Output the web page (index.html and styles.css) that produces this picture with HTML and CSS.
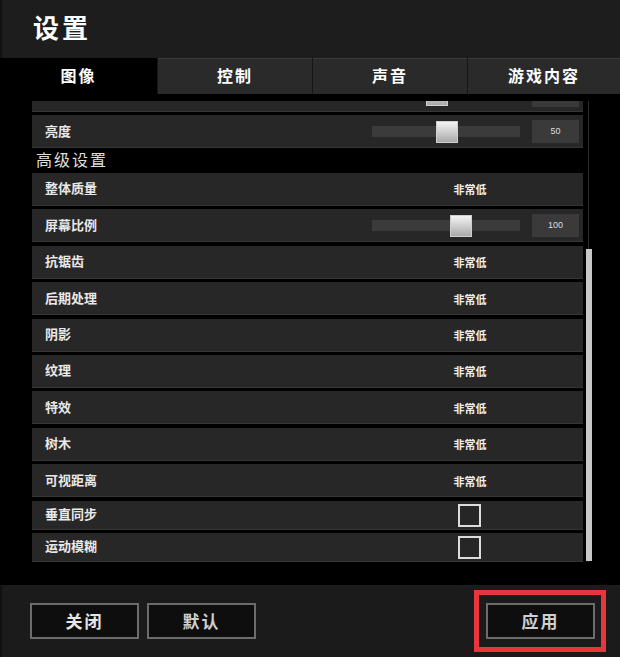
FILE: index.html
```html
<!DOCTYPE html>
<html lang="zh-CN">
<head>
<meta charset="utf-8">
<title>设置</title>
<link rel="stylesheet" href="styles.css">
</head>
<body>
<div class="window">
  <header class="titlebar"><h1 class="title">设置</h1></header>
  <nav class="tabs">
    <div class="tab active">图像</div>
    <div class="tab">控制</div>
    <div class="tab">声音</div>
    <div class="tab">游戏内容</div>
  </nav>
  <main class="content">
    <div class="viewport">
      <div class="list">
        <div class="row">
          <span class="label"></span>
          <div class="control">
            <div class="track"><div class="knob" style="left:54px"></div></div>
            <div class="numbox"></div>
          </div>
        </div>
        <div class="row">
          <span class="label">亮度</span>
          <div class="control">
            <div class="track"><div class="knob" style="left:64px"></div></div>
            <div class="numbox">50</div>
          </div>
        </div>
        <div class="section">高级设置</div>
        <div class="row"><span class="label">整体质量</span><div class="control"><span class="value">非常低</span></div></div>
        <div class="row">
          <span class="label">屏幕比例</span>
          <div class="control">
            <div class="track"><div class="knob" style="left:78px"></div></div>
            <div class="numbox">100</div>
          </div>
        </div>
        <div class="row"><span class="label">抗锯齿</span><div class="control"><span class="value">非常低</span></div></div>
        <div class="row"><span class="label">后期处理</span><div class="control"><span class="value">非常低</span></div></div>
        <div class="row"><span class="label">阴影</span><div class="control"><span class="value">非常低</span></div></div>
        <div class="row"><span class="label">纹理</span><div class="control"><span class="value">非常低</span></div></div>
        <div class="row"><span class="label">特效</span><div class="control"><span class="value">非常低</span></div></div>
        <div class="row"><span class="label">树木</span><div class="control"><span class="value">非常低</span></div></div>
        <div class="row"><span class="label">可视距离</span><div class="control"><span class="value">非常低</span></div></div>
        <div class="row short"><span class="label">垂直同步</span><div class="control"><span class="checkbox"></span></div></div>
        <div class="row short"><span class="label">运动模糊</span><div class="control"><span class="checkbox"></span></div></div>
      </div>
    </div>
    <div class="scrollbar"><div class="thumb"></div></div>
  </main>
  <footer class="footer">
    <button class="btn">关闭</button>
    <button class="btn dim">默认</button>
    <div class="spacer"></div>
    <div class="highlight"><button class="btn dim">应用</button></div>
  </footer>
</div>
</body>
</html>
```
FILE: styles.css
```css
* { box-sizing: border-box; }
html, body { margin: 0; padding: 0; background: #000; }
body {
  width: 620px;
  height: 657px;
  overflow: hidden;
  font-family: "Noto Sans CJK SC", "Noto Sans", sans-serif;
  color: #ececec;
}
.window { width: 620px; height: 657px; display: flex; flex-direction: column; }

.titlebar {
  height: 58px;
  background: #1d1d1d;
  border-left: 2px solid #111;
  display: flex;
  align-items: center;
  padding-left: 31px;
}
.title {
  margin: 0;
  font-size: 26px;
  font-weight: 700;
  letter-spacing: 3px;
  line-height: 30px;
  margin-top: -4px;
  color: #fff;
}

.tabs {
  height: 36px;
  display: grid;
  grid-template-columns: 157px 154px 154px 1fr;
  gap: 1px;
  background: #151515;
}
.tab {
  background: #2a2a2a;
  color: #fff;
  font-size: 16px;
  font-weight: 700;
  letter-spacing: 2px;
  line-height: 34px;
  text-align: center;
  box-shadow: inset 0 1px 0 #3a3a3a;
}
.tab.active { background: #000; box-shadow: none; }

.content {
  height: 491px;
  background: #000;
  display: flex;
  padding: 7px 0 23px 32px;
}
.viewport { width: 551px; height: 461px; overflow: hidden; }
.list { margin-top: -22.4px; }

.row {
  height: 33px;
  margin-bottom: 3.4px;
  background: #272727;
  box-shadow: inset 0 -1px 0 #363636;
  display: flex;
  align-items: center;
}
.row.short { height: 29px; }
.label {
  flex: 1;
  padding-left: 13px;
  font-size: 13px;
  font-weight: 700;
  color: #e8e8e8;
  line-height: 16px;
  margin-top: -2px;
}
.control { width: 211px; display: flex; align-items: center; }
.value {
  width: 196px;
  text-align: center;
  font-size: 11px;
  font-weight: 700;
  color: #eee;
  line-height: 14px;
}
.checkbox {
  width: 23px;
  height: 23px;
  margin-left: 86px;
  border: 2px solid #dcdcdc;
  background: #262626;
}
.track {
  position: relative;
  width: 148px;
  height: 11px;
  background: #3b3b3b;
}
.knob {
  position: absolute;
  top: -5.5px;
  width: 22px;
  height: 22px;
  background: linear-gradient(#f4f4f4, #a9a9a9);
  border: 1px solid #cfcfcf;
}
.numbox {
  width: 47px;
  height: 23px;
  margin-left: 12px;
  background: #3a3a3a;
  font-family: "Liberation Sans", sans-serif;
  font-size: 9px;
  color: #ddd;
  line-height: 23px;
  text-align: center;
}

.section {
  height: 21.6px;
  margin-top: -3.4px;
  margin-bottom: 3.4px;
  padding-left: 4px;
  font-size: 16px;
  color: #dedede;
  letter-spacing: 2px;
  line-height: 22px;
}

.scrollbar {
  width: 6px;
  height: 461px;
  margin-left: 3px;
  background: linear-gradient(to right, transparent 2.5px, #2c2c2c 2.5px, #2c2c2c 3.5px, transparent 3.5px);
}
.thumb {
  margin-top: 148px;
  height: 312px;
  background: #c8c8c8;
}

.footer {
  height: 72px;
  background: #1b1b1b;
  border-left: 2px solid #111;
  display: flex;
  align-items: center;
  padding: 0 14px 0 28px;
}
.btn {
  width: 109px;
  height: 36px;
  margin: 0 8px 0 0;
  padding: 0;
  background: #0e0e0e;
  border: 2px solid #6c6c6c;
  color: #e6e6e6;
  font-family: "Noto Sans CJK SC", sans-serif;
  font-size: 17px;
  font-weight: 700;
  letter-spacing: 2px;
  line-height: 30px;
}
.btn.dim { color: #cfcfcf; }
.spacer { flex: 1; }
.highlight {
  border: 5px solid #e7363c;
  padding: 8px 6px 8px 7px;
}
.highlight .btn { margin: 0; }
```
